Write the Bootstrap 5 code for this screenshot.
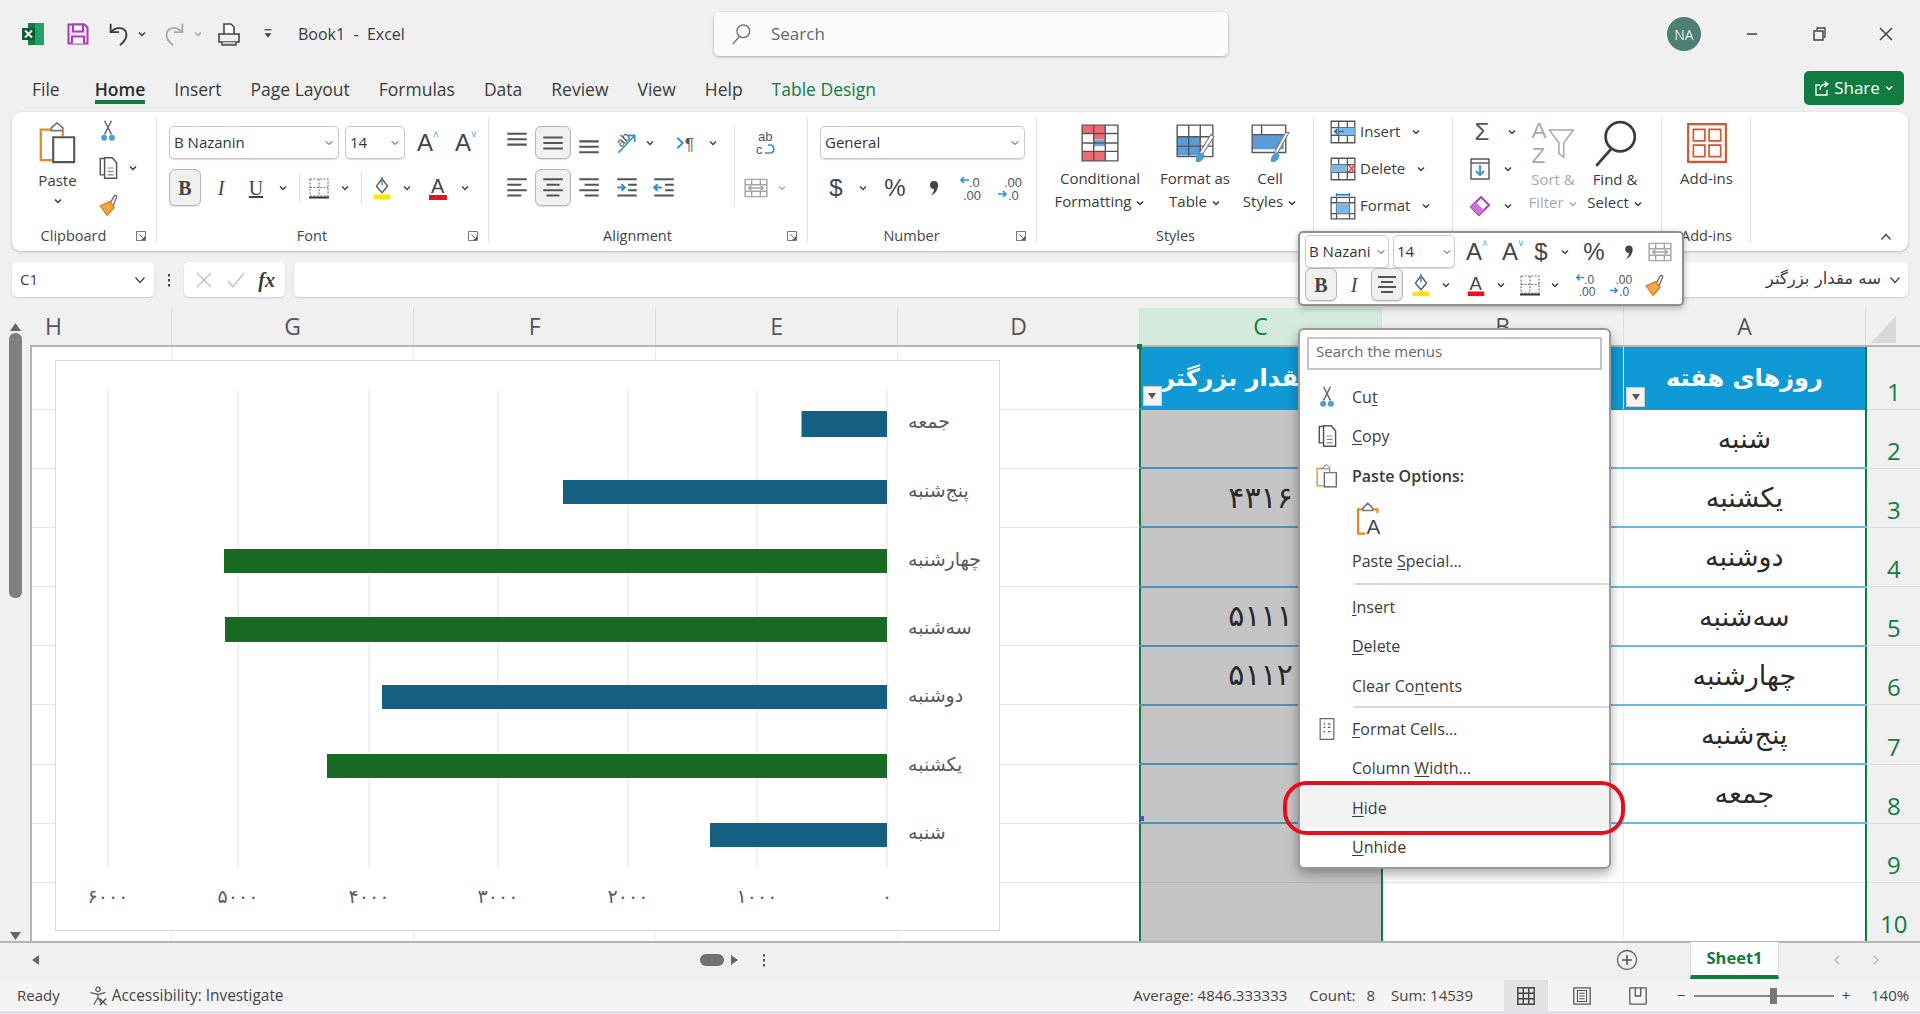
<!DOCTYPE html>
<html lang="en">
<head>
<meta charset="utf-8">
<title>Book1 - Excel</title>
<link rel="stylesheet" href="https://cdn.jsdelivr.net/npm/bootstrap@5.3.0/dist/css/bootstrap.min.css">
<style>
html,body{height:100%;margin:0;overflow:hidden}
body{background:#f0f0f0;font-family:"Open Sans","Liberation Sans",sans-serif;color:#3b3b3b;font-size:15px}
.app{height:1014px;width:1920px}
.fa{font-family:"DejaVu Sans",sans-serif}
svg{display:block;overflow:visible;flex:none}
.x4{width:4px;flex:none}.x6{width:6px;flex:none}.x8{width:8px;flex:none}.x10{width:10px;flex:none}.x12{width:12px;flex:none}.x16{width:16px;flex:none}.x18{width:18px;flex:none}.x20{width:20px;flex:none}.x22{width:22px;flex:none}.x24{width:24px;flex:none}.x28{width:28px;flex:none}.x30{width:30px;flex:none}.x32{width:32px;flex:none}.x34{width:34px;flex:none}.x35{width:35px;flex:none}.x36{width:36px;flex:none}.x38{width:38px;flex:none}.x40{width:40px;flex:none}.x42{width:42px;flex:none}.x44{width:44px;flex:none}.x46{width:46px;flex:none}.x48{width:48px;flex:none}.x52{width:52px;flex:none}.x54{width:54px;flex:none}.x62{width:62px;flex:none}.x66{width:66px;flex:none}.x67{width:67px;flex:none}.x68{width:68px;flex:none}.x70{width:70px;flex:none}.x80{width:80px;flex:none}.x110{width:110px;flex:none}
.i12{width:12px;height:12px}.i16{width:16px;height:16px}.i20{width:20px;height:20px}.i22{width:22px;height:22px}.i24{width:24px;height:24px}.i26{width:26px;height:26px}.i28{width:28px;height:28px}.i34{width:34px;height:34px}.i40{width:42px;height:42px}.c10{width:10px;height:10px}
.ib{display:flex;align-items:center;justify-content:center;padding:0;border:1px solid transparent;border-radius:6px;color:#444;height:100%}
.ib.on{background:#f0f0f0;border-color:#b5b5b5;box-shadow:0 1px 1px rgba(0,0,0,.12)}
.title-row{height:68px;flex:none}
.title-left{width:714px;flex:none;height:100%}
.book{margin-left:18px;font-size:16px;white-space:nowrap}
.searchbox{width:514px;height:44px;background:#fbfbfb;border-radius:5px;box-shadow:0 1px 3px rgba(0,0,0,.3);color:#666;font-size:17px}
.searchbox svg{margin:0 19px 0 16px}
.avatar{width:34px;height:34px;border-radius:50%;background:#4f7f72;color:#dfe9e6;font-size:14px;margin-right:17px}
.win{height:34px}
.tabs-row{height:44px;flex:none;padding-left:32px;padding-right:16px}
.tabs-row .nav{gap:29px;height:44px}
.tabs-row .nav-item:first-child{margin-right:6px}
.tabs-row .nav-link{padding:8px 0 0;height:36px;color:#3b3b3b;font-size:17.5px;line-height:26px;border-bottom:4px solid transparent}
.tabs-row .nav-link.active{color:#2d2d2d;font-weight:600;border-bottom-color:#107c41}
.tabs-row .nav-link.tdesign{color:#107c41}
.share{background:#107c41;color:#fff;width:100px;height:34px;margin-top:3px;border-radius:5px;padding:0;font-size:17px;gap:4px}
.share:hover{background:#107c41;color:#fff}
.ribbon{height:139px;flex:none;margin:0 12px;background:#fff;border:0;border-radius:9px;box-shadow:0 1px 3px rgba(0,0,0,.22)}
.rg{height:100%;flex:none;position:relative}
.rg::after{content:"";position:absolute;right:0;top:5px;bottom:8px;width:1px;background:#dedede}
.rg-body{height:112px;flex:none}
.rg-label{height:24px;flex:none;font-size:14.5px;color:#444;line-height:24px}
.launch{width:22px;flex:none}
.g-clip{width:145px}.g-font{width:332px}.g-align{width:319px}.g-num{width:229px}.g-styles{width:277px}.g-cells{width:139px}.g-edit{width:209px}.g-add{width:89px}
.g-font .rg-body,.g-num .rg-body,.g-align .rg-body{padding-top:14px}
.g-font .rg-body{padding-left:12px}.g-num .rg-body{padding-left:12px}.g-align .rg-body{padding-left:10px}
.row1{height:33px;flex:none}.row2{height:37px;flex:none;margin-top:10px}
.form-select.xs{height:33px;padding:0 20px 0 4px;font-size:15px;color:#333;border-color:#c9c9c9;border-radius:5px;background-size:10px 8px;background-position:right 4px center;box-shadow:0 1px 1px rgba(0,0,0,.15);min-height:0;line-height:1}
.fs170{width:170px;flex:none}.fs60{width:60px;flex:none}.fs205{width:205px;flex:none}
.fs84{width:84px;flex:none}.fs62{width:62px;flex:none}
.A{font-size:24px;line-height:1;color:#444;font-family:"Liberation Sans",sans-serif;position:relative}
.A small{font-size:10px;position:absolute;top:-1px;color:#4c9ed9}
.tb{font-size:20px;line-height:1;font-family:"Liberation Serif",serif}
.sep{width:1px;height:30px;background:#ddd;flex:none}
.clip-paste{width:84px;flex:none;padding-top:10px;padding-left:7px;font-size:15px}
.clip-paste svg{margin-bottom:5px}
.clip-col{width:40px;flex:none}
.v37>div{height:37px}
.big{height:100%;padding-top:10px;font-size:15px;line-height:23px;text-align:center;white-space:nowrap}
.big svg{margin:0 auto 3px}
.big svg.large{width:50px;height:50px;margin-top:-5px;margin-bottom:0}
.big svg.d-inline-block{vertical-align:middle}
.muted{color:#a9a9a9}
.g-styles .rg-body{padding-left:8px}
.g-cells .rg-body{padding-left:15px;padding-top:1px}
.g-edit .rg-body{padding-left:15px;padding-top:1px}
.cellrow{height:37px;font-size:15px;gap:3px}
.cellrow svg.c10{margin-left:8px}
.collapse-btn{width:64px;margin-left:auto;flex:none}
.fbar{height:35px;flex:none;margin:11px 12px}
.fbox{background:#fff;border-radius:5px;box-shadow:0 1px 2px rgba(0,0,0,.15);height:35px}
.namebox{width:142px;flex:none;padding:0 8px;font-size:15px}
.fdots{width:30px;flex:none}
.fbtns{width:101px;flex:none}
.finput{width:auto;margin-left:9px;padding:0 7px 0 10px;font-size:16.5px}
.sheet-wrap{height:633px;flex:none}
.vbar{width:30px;flex:none;padding:25px 8px 0 9px;height:100%;position:relative}
.vthumb{height:265px;background:#808080;border-radius:6px}
.varrow-up,.varrow-dn{position:absolute;left:9px;width:13px}
.varrow-up{top:14px}.varrow-dn{bottom:0}
.sheet{flex:1 1 auto;overflow:hidden;position:relative}
.c-h{width:140.6px}.c-n{width:242px}.c-r{width:55.4px}
.sheet table.table{table-layout:fixed;width:1890px;margin:0;--bs-table-bg:#fff;--bs-table-color:#2a2a2a;border-collapse:collapse}
.sheet table.table>thead>tr>th{height:38px;padding:0;--bs-table-bg:#f0f0f0;color:#555;font-weight:400;font-size:23px;line-height:1;text-align:center;vertical-align:middle;border-bottom:2px solid #b5b5b5;border-right:1px solid #dcdcdc;border-top:0;box-shadow:none}
.sheet table.table>thead>tr>th.hcut{text-align:left;padding-left:14px}
.sheet table.table>thead>tr>th.selh{--bs-table-bg:#d3eadc;color:#107c41}
.sheet table.table>tbody>tr>td{padding:0;height:59.2px;text-align:center;vertical-align:middle;border-bottom:1px solid #e4e4e4;border-right:1px solid #ececec;font-size:27px;line-height:1;box-shadow:none;position:relative}
.sheet table.table>tbody>tr>td:first-child{border-left:2px solid #b5b5b5}
.sheet table.table>tbody>tr.r1>td{height:63px}
.sheet table.table>tbody>tr>td.blu{border-bottom:2px solid #67bbe0}
.sheet table.table>tbody>tr>td.sel{--bs-table-bg:#c4c4c4;border-right:2px solid #107c41;border-left:2px solid #107c41;border-bottom:2px solid #4d91b5;font-size:30px}
.sheet table.table>tbody>tr>td.sel.nb{border-bottom:1px solid #b6b6b6}
.sheet table.table>tbody>tr>td.hd{--bs-table-bg:#0f9ad6;color:#fff;font-weight:700;font-size:24px;border-bottom-color:#0f9ad6;vertical-align:middle}
.sheet table.table>tbody>tr>td.hd.sel{--bs-table-bg:#0f9ad6;border-right-color:#0f9ad6;font-size:24px}
.sheet table.table>tbody>tr>td.rn{--bs-table-bg:#f0f0f0;color:#107c41;font-size:24px;font-family:"Open Sans",sans-serif;border-left:2px solid #107c41;border-bottom:1px solid #dcdcdc;border-right:0;vertical-align:bottom;padding-bottom:5px}
.flt{position:absolute;left:2px;bottom:2px;width:19px;height:20px;background:#f4f4f4;border:1px solid #ccc;display:flex;align-items:center;justify-content:center}
.flt i{width:0;height:0;border:4px solid transparent;border-top:6px solid #555;border-bottom:0}
.tri{width:0;height:0;border-style:solid;border-width:0 0 27px 25px;border-color:transparent transparent #d8d8d8 transparent;position:absolute;top:8px;left:1841px}
.chart{position:absolute;left:25px;top:52px;width:945px;height:571px;background:#fff;border:1px solid #d9d9d9}
.chart text{font-family:"DejaVu Sans",sans-serif;fill:#595959}
.handle{position:absolute;left:1109px;top:508px;width:5px;height:5px;background:#3566a8}
.cell-handle{position:absolute;left:1107px;top:36px;width:5px;height:5px;background:#107c41}
.mini{position:absolute;left:1298px;top:231px;width:386px;height:75px;background:#fff;border:2px solid #8f8f8f;border-radius:5px;box-shadow:0 2px 6px rgba(0,0,0,.3);padding:3px 5px;z-index:5}
.mini .row1{height:31px;margin-bottom:1px}.mini .mrow2{height:33px}
.mini .form-select.xs{padding:0 12px 0 3px;background-position:right 2px center}
.ctx.dropdown-menu{position:absolute;left:1298px;top:328px;width:313px;height:541px;margin:0;padding:7px 0 0;border:2px solid #9a9a9a;border-radius:6px;background:#fff;box-shadow:0 5px 12px rgba(0,0,0,.33);z-index:6}
.ctx .msearch{height:33px;margin:0 7px 7px;border:2px solid #c4c4c4;color:#666;font-size:15px;padding:0 7px;line-height:25px}
.ctx .dropdown-item{height:39.5px;padding:0;display:flex;align-items:center;color:#3b3b3b;font-size:16px}
.ctx .dropdown-item .mi{width:52px;flex:none;display:flex;justify-content:center;padding-left:2px}
.ctx .dropdown-item.hl{background:#f3f3f3}
.ctx .dropdown-item.tall{height:46px}
.ctx .dropdown-divider{margin:2px 0 2px 54px;border-color:#d8d8d8;opacity:1;border-top-width:2px}
.ctx .dropdown-divider.thin{margin-top:.75px;margin-bottom:.75px}
.ctx u{text-underline-offset:2px}
.ring{position:absolute;left:1283px;top:781px;width:342px;height:54px;border:4px solid #e60f1e;border-radius:24px;z-index:7;pointer-events:none}
.bot{height:36px;flex:none;background:#f0f0f0;border-top:2px solid #b5b5b5}
.hthumb{width:24px;height:12px;background:#707070;border-radius:6px;flex:none}
.hspace{flex:none;padding-left:658px}
.plus{margin-left:auto;margin-right:52px}
.sheettab{width:89px;height:37px;background:#fff;border-bottom:4px solid #107c41;color:#107c41;font-weight:700;font-size:16.5px;flex:none;border-left:1px solid #ddd;border-right:1px solid #ddd}
.tabnav{width:141px;flex:none;gap:27px;padding-left:52px}
.sb{height:31px;flex:none;margin-top:3px;background:#f4f4f4;font-size:15px;color:#444;white-space:nowrap}
.strip{height:3px;flex:none;background:#d8e4ee}
.vw{height:31px;width:44px;flex:none}
.vw.on{background:#e2e2e2}
.slider{width:140px;height:2px;background:#888;position:relative;flex:none;margin-left:5px}
.slider i{position:absolute;left:76px;top:-7px;width:7px;height:16px;background:#777}
.al-col{width:235px;flex:none}
.al-side{width:60px;flex:none;border-left:1px solid #e2e2e2;height:80px}
.ns{font-size:24px;font-family:"Liberation Sans",sans-serif}
.sigma{font-size:24px;line-height:1;color:#555;font-family:"Liberation Sans",sans-serif}
.st-ready{margin-left:17px}.st-acc{margin-left:28px}.st-accl{margin-left:4px;font-size:15.4px}
.st-avg{margin-right:22px}.st-cnt{margin-right:16px;word-spacing:7px}.st-sum{margin-right:31px}
.st-min{margin-left:13px}.st-plus{margin-left:4px}
.st-pct{margin-left:17px;margin-right:11px;width:38px;text-align:center}
</style>
</head>
<body>
<svg class="d-none" xmlns="http://www.w3.org/2000/svg">
<symbol id="chev" viewBox="0 0 10 10"><path d="M2 3.5l3 3 3-3" fill="none" stroke="currentColor" stroke-width="1.5"/></symbol>
<symbol id="xl" viewBox="0 0 26 26"><path d="M8 2h16v22H8z" fill="#107c41"/><path d="M15 2h9v22h-9z" fill="#21a366"/><path d="M2 7h13v12H2z" fill="#0b5c30"/><path d="M5 9.5l7 7m0-7l-7 7" stroke="#fff" stroke-width="1.8"/></symbol>
<symbol id="save" viewBox="0 0 24 24"><path d="M2.5 2.5h16l3 3v16h-19z" fill="#f3e3f7" stroke="#ab3dbd" stroke-width="2"/><path d="M7 2.5h10v7H7zM6 21.5v-7h12v7" fill="#fff" stroke="#ab3dbd" stroke-width="2"/></symbol>
<symbol id="undo" viewBox="0 0 24 28"><path d="M3 3v9h9" fill="none" stroke="currentColor" stroke-width="2"/><path d="M3.5 12C8 6 19 6 20 14c.5 5-3 9-7 12" fill="none" stroke="currentColor" stroke-width="2"/></symbol>
<symbol id="redo" viewBox="0 0 24 28"><path d="M21 3v9h-9" fill="none" stroke="currentColor" stroke-width="2"/><path d="M20.5 12C16 6 5 6 4 14c-.5 5 3 9 7 12" fill="none" stroke="currentColor" stroke-width="2"/></symbol>
<symbol id="print" viewBox="0 0 24 24"><path d="M7 12V2h7l3 3v7" fill="#fff" stroke="#444" stroke-width="1.6"/><path d="M2 12h20v8H2z" fill="none" stroke="#444" stroke-width="1.6"/><path d="M5 20v3h14v-3" fill="#ccc" stroke="#444" stroke-width="1.4"/></symbol>
<symbol id="qat" viewBox="0 0 12 14"><path d="M2 2h8" stroke="#444" stroke-width="1.5"/><path d="M2 6h8l-4 5z" fill="#444"/></symbol>
<symbol id="find" viewBox="0 0 24 24"><circle cx="14.5" cy="9" r="7" fill="none" stroke="currentColor" stroke-width="1.3"/><path d="M10 15L3 23" stroke="currentColor" stroke-width="1.3"/></symbol>
<symbol id="paste" viewBox="0 0 40 44"><path d="M13 8H2v32h12" fill="none" stroke="#e58a23" stroke-width="2.4"/><path d="M13 9V6l6-5 6 5v3z" fill="#fff" stroke="#777" stroke-width="1.8"/><path d="M25 9v6" stroke="#e58a23" stroke-width="2.4"/><path d="M15 16h22v26H15z" fill="#fff" stroke="#555" stroke-width="2.2"/></symbol>
<symbol id="cut" viewBox="0 0 24 28"><path d="M8 18L16 2M16 18L8 2" stroke="#666" stroke-width="1.7"/><circle cx="7.5" cy="22" r="3.5" fill="#4c9ed9"/><circle cx="16.5" cy="22" r="3.5" fill="#4c9ed9"/></symbol>
<symbol id="copy" viewBox="0 0 24 28"><path d="M8 3H3v19h5" fill="none" stroke="#555" stroke-width="1.7"/><path d="M8 2h9l5 6v18H8z" fill="#fff" stroke="#555" stroke-width="1.7"/><path d="M11.5 14h7M11.5 18h7M11.5 22h7" stroke="#888" stroke-width="1.3"/></symbol>
<symbol id="brush" viewBox="0 0 24 28"><path d="M14 13l5-9c1-2 4-1 3 1l-4 10z" fill="#fff" stroke="#666" stroke-width="1.5"/><path d="M3 15l11-5 5 7-8 9z" fill="#f3a64a" stroke="#df7f1a" stroke-width="1.6"/></symbol>
<symbol id="launch" viewBox="0 0 12 12"><path d="M1.5 1.5h9v9h-9z" fill="none" stroke="#777"/><path d="M4.5 4.5l5 5M9.5 6.5v3h-3" fill="none" stroke="#555"/></symbol>
<symbol id="borders" viewBox="0 0 24 24"><path d="M3 3h18v17H3zM12 3v17M3 11.5h18" fill="none" stroke="#777" stroke-width="1.2" stroke-dasharray="2 1.4"/><path d="M2 21.5h20" stroke="#333" stroke-width="2"/></symbol>
<symbol id="fillc" viewBox="0 0 24 26"><path d="M12 3l6 8-6 7-6-7z" fill="#fff" stroke="#555" stroke-width="1.5"/><path d="M12 1v9" stroke="#3c8ed0" stroke-width="1.6"/><path d="M3 20h18v5H3z" fill="#ffe600"/></symbol>
<symbol id="fcol" viewBox="0 0 24 26"><text x="5" y="18" font-size="20" font-family="Liberation Sans" fill="#444">A</text><path d="M3 20h18v5H3z" fill="#e8131c"/></symbol>
<symbol id="comma" viewBox="0 0 24 24"><circle cx="13" cy="9" r="4" fill="#444"/><path d="M16.8 9c.4 5-2.5 9-7 10.5 2.5-2.5 3.5-5 3-7z" fill="#444"/></symbol>
<symbol id="l-top" viewBox="0 0 24 24"><path d="M3 3.5h18M3 8.5h18M3 13.5h18" stroke="#555" stroke-width="1.9"/></symbol>
<symbol id="l-mid" viewBox="0 0 24 24"><path d="M3 7h18M3 12h18M3 17h18" stroke="#555" stroke-width="1.9"/></symbol>
<symbol id="l-bot" viewBox="0 0 24 24"><path d="M3 10.5h18M3 15.5h18M3 20.5h18" stroke="#555" stroke-width="1.9"/></symbol>
<symbol id="a-l" viewBox="0 0 24 24"><path d="M3 4h18M3 9h13M3 14h18M3 19h13" stroke="#555" stroke-width="1.9"/></symbol>
<symbol id="a-c" viewBox="0 0 24 24"><path d="M3 4h18M6 9h12M3 14h18M6 19h12" stroke="#555" stroke-width="1.9"/></symbol>
<symbol id="a-r" viewBox="0 0 24 24"><path d="M3 4h18M8 9h13M3 14h18M8 19h13" stroke="#555" stroke-width="1.9"/></symbol>
<symbol id="out" viewBox="0 0 24 24"><path d="M3 4h18M13 9h8M13 14h8M3 19h18" stroke="#555" stroke-width="1.9"/><path d="M3 11.5h7M7 8.5l3 3-3 3" fill="none" stroke="#2e8fd6" stroke-width="1.8"/></symbol>
<symbol id="ind" viewBox="0 0 24 24"><path d="M3 4h18M13 9h8M13 14h8M3 19h18" stroke="#555" stroke-width="1.9"/><path d="M10 11.5H3M6 8.5l-3 3 3 3" fill="none" stroke="#2e8fd6" stroke-width="1.8"/></symbol>
<symbol id="orient" viewBox="0 0 24 24"><text x="3" y="14" font-size="12" font-family="Liberation Sans" fill="#555" transform="rotate(-45 8 10)">ab</text><path d="M5 21L19 6M14 5h6v6" fill="none" stroke="#2e8fd6" stroke-width="1.6"/></symbol>
<symbol id="rtl" viewBox="0 0 24 24"><text x="10" y="18" font-size="16" font-family="Liberation Sans" fill="#555">¶</text><path d="M3 7l5 5-5 5" fill="none" stroke="#2e8fd6" stroke-width="1.8"/></symbol>
<symbol id="wrap" viewBox="0 0 24 28"><text x="5" y="12" font-size="13" font-family="Liberation Sans" fill="#555">ab</text><text x="3" y="25" font-size="13" font-family="Liberation Sans" fill="#555">c</text><path d="M12 24h5c5 0 5-8 0-8h-2" fill="none" stroke="#2e8fd6" stroke-width="1.7"/></symbol>
<symbol id="merge" viewBox="0 0 24 24"><path d="M2 4h20v16H2zM2 9h20M2 15h20M8 4v5M16 4v5M8 15v5M16 15v5" fill="none" stroke="#a5a5a5" stroke-width="1.3"/><path d="M5 12h14M8 10l-3 2 3 2M16 10l3 2-3 2" fill="none" stroke="#a5a5a5" stroke-width="1.2"/></symbol>
<symbol id="inc" viewBox="0 0 26 26"><path d="M10 5H2M5 2L2 5l3 3" fill="none" stroke="#2e8fd6" stroke-width="1.6"/><text x="10" y="12" font-size="13" font-family="Liberation Sans" fill="#555">.0</text><text x="4" y="25" font-size="13" font-family="Liberation Sans" fill="#555">.00</text></symbol>
<symbol id="dec" viewBox="0 0 26 26"><text x="8" y="12" font-size="13" font-family="Liberation Sans" fill="#555">.00</text><path d="M2 19h8M7 16l3 3-3 3" fill="none" stroke="#2e8fd6" stroke-width="1.6"/><text x="12" y="25" font-size="13" font-family="Liberation Sans" fill="#555">.0</text></symbol>
<symbol id="cf" viewBox="0 0 40 40"><path d="M3 3h34v34H3z" fill="#fff"/><path d="M3 3h22v8H3zM14 11h11v6H14zM3 28h22v9H3z" fill="#ef6a72"/><path d="M3 11h11v6H3zM14 17h11v5H14z" fill="#fff"/><path d="M14 17h11v6H14z" fill="#6ea8dc"/><path d="M3 3h34v34H3zM14 3v34M25 3v34M3 11h34M3 20h34M3 28h34" fill="none" stroke="#555" stroke-width="1.3"/></symbol>
<symbol id="ft" viewBox="0 0 40 40"><path d="M3 14h22v18H3z" fill="#5b9bd8"/><path d="M3 3h34v30H3zM14 3v30M25 3v30M3 14h34M3 23h34" fill="none" stroke="#555" stroke-width="1.3"/><path d="M38 14L27 31l-3-1 11-18z" fill="#fff" stroke="#777"/><path d="M26 29c-4 2-6 5-5 9 4 1 8-2 8-7z" fill="#4c9ed9"/></symbol>
<symbol id="cs" viewBox="0 0 40 40"><path d="M3 12h30v14H3z" fill="#5b9bd8"/><path d="M3 3h32v26H3z" fill="none" stroke="#555" stroke-width="1.3"/><path d="M3 12h30M12 3v9" stroke="#555" stroke-width="1.3"/><path d="M38 10L27 30l-3-1 11-19z" fill="#fff" stroke="#777"/><path d="M26 29c-4 2-6 5-5 9 4 1 8-2 8-7z" fill="#4c9ed9"/></symbol>
<symbol id="ins" viewBox="0 0 26 26"><path d="M2 3h22v20H2zM2 9h22M2 16h22M9 3v20M17 3v20" fill="none" stroke="#555" stroke-width="1.2"/><path d="M9 9h15v7H9z" fill="#7fb7e3"/><path d="M14 12.5H5M8 10l-3 2.5L8 15" fill="none" stroke="#1d7ac9" stroke-width="1.5"/></symbol>
<symbol id="del" viewBox="0 0 26 26"><path d="M2 3h22v20H2zM2 9h22M2 16h22M9 3v20M17 3v20" fill="none" stroke="#555" stroke-width="1.2"/><path d="M2 9h14v7H2z" fill="#7fb7e3"/><path d="M18 9l6 7m0-7l-6 7" stroke="#e04848" stroke-width="1.6"/></symbol>
<symbol id="fmt" viewBox="0 0 26 26"><path d="M2 5h22v20H2zM2 10h22M2 20h22M7 5v20M19 5v20" fill="none" stroke="#555" stroke-width="1.2"/><path d="M7 10h12v10H7z" fill="#7fb7e3"/><path d="M7 1v3M19 1v3M7 2.5h12" stroke="#1d7ac9" stroke-width="1.3"/></symbol>
<symbol id="fd" viewBox="0 0 24 24"><path d="M3 2h18v20H3z" fill="#fff" stroke="#555" stroke-width="1.4"/><path d="M3 6h18" stroke="#555" stroke-width="1.4"/><path d="M12 8v10M8 14l4 4 4-4" fill="none" stroke="#2e8fd6" stroke-width="1.8"/></symbol>
<symbol id="clr" viewBox="0 0 24 24"><path d="M3 13L13 3l8 8-10 10z" fill="#fff" stroke="#a93fbf" stroke-width="2"/><path d="M3 13l5-5 8 8-5 5z" fill="#c67ad6"/></symbol>
<symbol id="sort" viewBox="0 0 42 42"><text x="3" y="17" font-size="19" font-family="Liberation Sans" fill="#a9a9a9">A</text><text x="3" y="38" font-size="19" font-family="Liberation Sans" fill="#a9a9a9">Z</text><path d="M18 10h20l-8 11v12l-4-3v-9z" fill="none" stroke="#a9a9a9" stroke-width="1.3"/></symbol>
<symbol id="addin" viewBox="0 0 40 40"><path d="M2 2h36v36H2z" fill="none" stroke="#d9542b" stroke-width="2"/><path d="M7 7h11v11H7zM22 7h11v11H22zM7 22h11v11H7zM22 22h11v11H22z" fill="none" stroke="#d9542b" stroke-width="1.6"/></symbol>
<symbol id="pa" viewBox="0 0 24 28"><path d="M7 6H3v20h6" fill="none" stroke="#e58a23" stroke-width="1.8"/><path d="M7 7V5l4-4 4 4v2z" fill="#fff" stroke="#777" stroke-width="1.4"/><path d="M15 6h4v3" fill="none" stroke="#e58a23" stroke-width="1.8"/><text x="10" y="26" font-size="17" font-family="Liberation Sans" fill="#444">A</text></symbol>
<symbol id="fc" viewBox="0 0 20 28"><path d="M2 2h16v24H2z" fill="#fff" stroke="#666" stroke-width="1.4"/><path d="M6 8h2M6 12h2M6 17h2M11 8h3M11 12h3M11 17h3" stroke="#555" stroke-width="1.4"/></symbol>
<symbol id="acc" viewBox="0 0 24 24"><circle cx="12" cy="4" r="2.6" fill="none" stroke="#555" stroke-width="1.4"/><path d="M3 8l9 2 9-2M12 10v4l-5 8M12 14l5 8" fill="none" stroke="#555" stroke-width="1.4"/><path d="M14 15l8 8m0-8l-8 8" stroke="#444" stroke-width="1.4"/></symbol>
<symbol id="grid" viewBox="0 0 22 22"><path d="M2 2h18v18H2zM8 2v18M14 2v18M2 8h18M2 14h18" fill="none" stroke="#444" stroke-width="1.6"/></symbol>
<symbol id="page" viewBox="0 0 22 22"><path d="M2 2h18v18H2z" fill="none" stroke="#555" stroke-width="1.4"/><path d="M6 5h10v12H6zM8 8h6M8 11h6M8 14h6" fill="none" stroke="#555" stroke-width="1.2"/></symbol>
<symbol id="brk" viewBox="0 0 22 22"><path d="M2 20V2h18v18M2 20h18" fill="none" stroke="#555" stroke-width="1.4"/><path d="M8 2v9h6V2" fill="none" stroke="#555" stroke-width="1.4"/></symbol>
</svg>

<div class="app d-flex flex-column position-relative">

  <!-- title bar -->
  <header class="title-row d-flex align-items-center">
    <div class="title-left d-flex align-items-center">
      <div class="x66 d-flex justify-content-center"><svg class="i26"><use href="#xl"/></svg></div>
      <div class="x24 d-flex justify-content-center"><svg class="i24"><use href="#save"/></svg></div>
      <div class="x12"></div>
      <div class="x34 d-flex justify-content-center"><svg class="i26"><use href="#undo"/></svg></div>
      <div class="x12 d-flex justify-content-center"><svg class="c10"><use href="#chev"/></svg></div>
      <div class="x6"></div>
      <div class="x40 d-flex justify-content-center muted"><svg class="i26"><use href="#redo"/></svg></div>
      <div class="x8 d-flex justify-content-center muted"><svg class="c10"><use href="#chev"/></svg></div>
      <div class="x54 d-flex justify-content-center"><svg class="i24"><use href="#print"/></svg></div>
      <div class="x24 d-flex justify-content-center"><svg class="i12"><use href="#qat"/></svg></div>
      <div class="book">Book1&nbsp; - &nbsp;Excel</div>
    </div>
    <div class="searchbox d-flex align-items-center"><svg class="i22"><use href="#find"/></svg><span>Search</span></div>
    <div class="ms-auto d-flex align-items-center">
      <div class="avatar d-flex align-items-center justify-content-center">NA</div>
      <div class="x67 win d-flex align-items-center justify-content-center"><svg class="i16" viewBox="0 0 16 16"><path d="M3 8h10" stroke="#444" stroke-width="1.6"/></svg></div>
      <div class="x67 win d-flex align-items-center justify-content-center"><svg class="i16" viewBox="0 0 16 16"><path d="M3 5h9v9H3z" fill="none" stroke="#444" stroke-width="1.5"/><path d="M6 4V2h8v9h-1" fill="none" stroke="#444" stroke-width="1.3"/></svg></div>
      <div class="x68 win d-flex align-items-center justify-content-center"><svg class="i16" viewBox="0 0 16 16"><path d="M2 2l12 12M14 2L2 14" stroke="#444" stroke-width="1.5"/></svg></div>
    </div>
  </header>

  <!-- tabs -->
  <div class="tabs-row d-flex justify-content-between align-items-start">
    <ul class="nav">
      <li class="nav-item"><a class="nav-link" href="#">File</a></li>
      <li class="nav-item"><a class="nav-link active" href="#">Home</a></li>
      <li class="nav-item"><a class="nav-link" href="#">Insert</a></li>
      <li class="nav-item"><a class="nav-link" href="#">Page Layout</a></li>
      <li class="nav-item"><a class="nav-link" href="#">Formulas</a></li>
      <li class="nav-item"><a class="nav-link" href="#">Data</a></li>
      <li class="nav-item"><a class="nav-link" href="#">Review</a></li>
      <li class="nav-item"><a class="nav-link" href="#">View</a></li>
      <li class="nav-item"><a class="nav-link" href="#">Help</a></li>
      <li class="nav-item"><a class="nav-link tdesign" href="#">Table Design</a></li>
    </ul>
    <button class="btn share d-flex align-items-center justify-content-center" type="button">
      <svg class="i16" viewBox="0 0 16 16"><path d="M6 5H2v10h11v-5" fill="none" stroke="#fff" stroke-width="1.3"/><path d="M6 10c0-4 3-6 7-6M10.5 1.5L14 4l-3.5 3" fill="none" stroke="#fff" stroke-width="1.3"/></svg>
      <span>Share</span><svg class="c10"><use href="#chev"/></svg>
    </button>
  </div>

  <!-- ribbon -->
  <section class="card ribbon flex-row">
    <div class="rg g-clip d-flex flex-column">
      <div class="rg-body d-flex">
        <div class="clip-paste d-flex flex-column align-items-center">
          <svg class="i40"><use href="#paste"/></svg>
          <span>Paste</span>
          <svg class="c10 mt-1"><use href="#chev"/></svg>
        </div>
        <div class="clip-col v37">
          <div class="d-flex align-items-center"><svg class="i24"><use href="#cut"/></svg></div>
          <div class="d-flex align-items-center"><svg class="i24"><use href="#copy"/></svg><svg class="c10 ms-2"><use href="#chev"/></svg></div>
          <div class="d-flex align-items-center"><svg class="i24"><use href="#brush"/></svg></div>
        </div>
      </div>
      <div class="rg-label d-flex"><span class="flex-fill text-center">Clipboard</span><span class="launch d-flex align-items-center"><svg class="i12"><use href="#launch"/></svg></span></div>
    </div>

    <div class="rg g-font d-flex flex-column">
      <div class="rg-body">
        <div class="row1 d-flex align-items-center">
          <select class="form-select xs fs170"><option>B Nazanin</option></select>
          <div class="x6"></div>
          <select class="form-select xs fs60"><option>14</option></select>
          <div class="x40 d-flex justify-content-center"><span class="A">A<small>˄</small></span></div>
          <div class="x36 d-flex justify-content-center"><span class="A">A<small>˅</small></span></div>
        </div>
        <div class="row2 d-flex align-items-center">
          <button class="btn ib on x32 tb fw-bold" type="button">B</button>
          <div class="x40 ib tb fst-italic">I</div>
          <div class="x30 ib tb text-decoration-underline">U</div>
          <div class="x24 ib"><svg class="c10"><use href="#chev"/></svg></div>
          <div class="x8 d-flex justify-content-center"><span class="sep"></span></div>
          <div class="x32 ib"><svg class="i24"><use href="#borders"/></svg></div>
          <div class="x20 ib"><svg class="c10"><use href="#chev"/></svg></div>
          <div class="x12 d-flex justify-content-center"><span class="sep"></span></div>
          <div class="x30 ib"><svg class="i24"><use href="#fillc"/></svg></div>
          <div class="x20 ib"><svg class="c10"><use href="#chev"/></svg></div>
          <div class="x42 ib"><svg class="i26"><use href="#fcol"/></svg></div>
          <div class="x12 ib"><svg class="c10"><use href="#chev"/></svg></div>
        </div>
      </div>
      <div class="rg-label d-flex"><span class="flex-fill text-center">Font</span><span class="launch d-flex align-items-center"><svg class="i12"><use href="#launch"/></svg></span></div>
    </div>

    <div class="rg g-align d-flex flex-column">
      <div class="rg-body d-flex">
        <div class="d-flex flex-column al-col">
          <div class="row1 d-flex align-items-center">
            <div class="x36 ib"><svg class="i26"><use href="#l-top"/></svg></div>
            <button class="btn ib on x36" type="button"><svg class="i26"><use href="#l-mid"/></svg></button>
            <div class="x36 ib"><svg class="i26"><use href="#l-bot"/></svg></div>
            <div class="x38 ib"><svg class="i26"><use href="#orient"/></svg></div>
            <div class="x10 ib"><svg class="c10"><use href="#chev"/></svg></div>
            <div class="x12"></div>
            <div class="x40 ib"><svg class="i26"><use href="#rtl"/></svg></div>
            <div class="x12 ib"><svg class="c10"><use href="#chev"/></svg></div>
          </div>
          <div class="row2 d-flex align-items-center">
            <div class="x36 ib"><svg class="i26"><use href="#a-l"/></svg></div>
            <button class="btn ib on x36" type="button"><svg class="i26"><use href="#a-c"/></svg></button>
            <div class="x36 ib"><svg class="i26"><use href="#a-r"/></svg></div>
            <div class="x40 ib"><svg class="i26"><use href="#out"/></svg></div>
            <div class="x34 ib"><svg class="i26"><use href="#ind"/></svg></div>
          </div>
        </div>
        <div class="al-side d-flex flex-column">
          <div class="row1 d-flex align-items-center ps-3"><svg class="i28"><use href="#wrap"/></svg></div>
          <div class="row2 d-flex align-items-center ps-2"><svg class="i26"><use href="#merge"/></svg><svg class="c10 ms-2 muted"><use href="#chev"/></svg></div>
        </div>
      </div>
      <div class="rg-label d-flex"><span class="flex-fill text-center">Alignment</span><span class="launch d-flex align-items-center"><svg class="i12"><use href="#launch"/></svg></span></div>
    </div>

    <div class="rg g-num d-flex flex-column">
      <div class="rg-body">
        <div class="row1 d-flex align-items-center"><select class="form-select xs fs205"><option>General</option></select></div>
        <div class="row2 d-flex align-items-center">
          <div class="x32 ib ns">$</div>
          <div class="x22 ib"><svg class="c10"><use href="#chev"/></svg></div>
          <div class="x42 ib ns">%</div>
          <div class="x34 ib"><svg class="i24"><use href="#comma"/></svg></div>
          <div class="x44 ib"><svg class="i26"><use href="#inc"/></svg></div>
          <div class="x30 ib"><svg class="i26"><use href="#dec"/></svg></div>
        </div>
      </div>
      <div class="rg-label d-flex"><span class="flex-fill text-center">Number</span><span class="launch d-flex align-items-center"><svg class="i12"><use href="#launch"/></svg></span></div>
    </div>

    <div class="rg g-styles d-flex flex-column">
      <div class="rg-body d-flex">
        <div class="big x110"><svg class="i40"><use href="#cf"/></svg>Conditional<br>Formatting <svg class="c10 d-inline-block m-0"><use href="#chev"/></svg></div>
        <div class="big x80"><svg class="i40"><use href="#ft"/></svg>Format as<br>Table <svg class="c10 d-inline-block m-0"><use href="#chev"/></svg></div>
        <div class="big x70"><svg class="i40"><use href="#cs"/></svg>Cell<br>Styles <svg class="c10 d-inline-block m-0"><use href="#chev"/></svg></div>
      </div>
      <div class="rg-label text-center">Styles</div>
    </div>

    <div class="rg g-cells d-flex flex-column">
      <div class="rg-body">
        <div class="cellrow d-flex align-items-center"><svg class="i28"><use href="#ins"/></svg><span>Insert</span><svg class="c10"><use href="#chev"/></svg></div>
        <div class="cellrow d-flex align-items-center"><svg class="i28"><use href="#del"/></svg><span>Delete</span><svg class="c10"><use href="#chev"/></svg></div>
        <div class="cellrow d-flex align-items-center"><svg class="i28"><use href="#fmt"/></svg><span>Format</span><svg class="c10"><use href="#chev"/></svg></div>
      </div>
      <div class="rg-label"></div>
    </div>

    <div class="rg g-edit d-flex flex-column">
      <div class="rg-body d-flex">
        <div class="x54">
          <div class="cellrow d-flex align-items-center"><span class="x28 text-center sigma">Σ</span><svg class="c10"><use href="#chev"/></svg></div>
          <div class="cellrow d-flex align-items-center"><svg class="i24 x28"><use href="#fd"/></svg><svg class="c10"><use href="#chev"/></svg></div>
          <div class="cellrow d-flex align-items-center"><svg class="i24 x28"><use href="#clr"/></svg><svg class="c10"><use href="#chev"/></svg></div>
        </div>
        <div class="big x62 muted"><svg class="large"><use href="#sort"/></svg>Sort &amp;<br>Filter <svg class="c10 d-inline-block m-0"><use href="#chev"/></svg></div>
        <div class="big x62"><svg class="large"><use href="#find"/></svg>Find &amp;<br>Select <svg class="c10 d-inline-block m-0"><use href="#chev"/></svg></div>
      </div>
      <div class="rg-label"></div>
    </div>

    <div class="rg g-add d-flex flex-column">
      <div class="rg-body"><div class="big"><svg class="i40"><use href="#addin"/></svg>Add-ins</div></div>
      <div class="rg-label text-center">Add-ins</div>
    </div>

    <div class="collapse-btn d-flex flex-column justify-content-end align-items-end pe-3 pb-2"><svg class="i12" viewBox="0 0 12 12"><path d="M1.5 8.5L6 3.5l4.5 5" fill="none" stroke="#444" stroke-width="1.4"/></svg></div>
  </section>

  <!-- formula bar -->
  <div class="fbar d-flex align-items-center">
    <div class="fbox namebox d-flex align-items-center justify-content-between"><span>C1</span><svg class="i12" viewBox="0 0 12 12"><path d="M1.5 3.5L6 8.5l4.5-5" fill="none" stroke="#444" stroke-width="1.3"/></svg></div>
    <div class="fdots d-flex justify-content-center"><svg class="i16" viewBox="0 0 16 16"><path d="M8 2v2.4M8 7v2.4M8 12v2.4" stroke="#444" stroke-width="2"/></svg></div>
    <div class="fbox fbtns d-flex align-items-center justify-content-around px-1">
      <svg class="i20" viewBox="0 0 20 20"><path d="M3 3l14 14M17 3L3 17" stroke="#bdbdbd" stroke-width="1.3"/></svg>
      <svg class="i20" viewBox="0 0 20 20"><path d="M2 11l5 6L18 3" fill="none" stroke="#bdbdbd" stroke-width="1.3"/></svg>
      <span class="tb fst-italic fw-bold">fx</span>
    </div>
    <div class="fbox finput flex-fill d-flex align-items-center justify-content-end fa"><span class="me-2" dir="rtl">سه مقدار بزرگتر</span><svg class="i12" viewBox="0 0 12 12"><path d="M1.5 3.5L6 8.5l4.5-5" fill="none" stroke="#444" stroke-width="1.3"/></svg></div>
  </div>

  <!-- sheet -->
  <div class="sheet-wrap d-flex">
    <div class="vbar">
      <svg class="varrow-up" viewBox="0 0 13 10"><path d="M6.5 1l5.5 8H1z" fill="#666"/></svg>
      <div class="vthumb"></div>
      <svg class="varrow-dn" viewBox="0 0 13 10"><path d="M6.5 9L1 1h11z" fill="#666"/></svg>
    </div>
    <div class="sheet">
      <table class="table">
        <colgroup><col class="c-h"><col class="c-n"><col class="c-n"><col class="c-n"><col class="c-n"><col class="c-n"><col class="c-n"><col class="c-n"><col class="c-r"></colgroup>
        <thead>
          <tr><th class="hcut">H</th><th>G</th><th>F</th><th>E</th><th>D</th><th class="selh">C</th><th>B</th><th>A</th><th></th></tr>
        </thead>
        <tbody class="fa">
          <tr class="r1"><td></td><td></td><td></td><td></td><td></td><td class="sel hd"><span class="flt"><i></i></span><span dir="rtl">سه مقدار بزرگتر</span></td><td class="hd"></td><td class="hd"><span class="flt"><i></i></span><span dir="rtl">روزهای هفته</span></td><td class="rn">1</td></tr>
          <tr><td></td><td></td><td></td><td></td><td></td><td class="sel"></td><td class="blu"></td><td class="blu" dir="rtl">شنبه</td><td class="rn">2</td></tr>
          <tr><td></td><td></td><td></td><td></td><td></td><td class="sel">۴۳۱۶</td><td class="blu"></td><td class="blu" dir="rtl">یکشنبه</td><td class="rn">3</td></tr>
          <tr><td></td><td></td><td></td><td></td><td></td><td class="sel"></td><td class="blu"></td><td class="blu" dir="rtl">دوشنبه</td><td class="rn">4</td></tr>
          <tr><td></td><td></td><td></td><td></td><td></td><td class="sel">۵۱۱۱</td><td class="blu"></td><td class="blu" dir="rtl">سه‌شنبه</td><td class="rn">5</td></tr>
          <tr><td></td><td></td><td></td><td></td><td></td><td class="sel">۵۱۱۲</td><td class="blu"></td><td class="blu" dir="rtl">چهارشنبه</td><td class="rn">6</td></tr>
          <tr><td></td><td></td><td></td><td></td><td></td><td class="sel"></td><td class="blu"></td><td class="blu" dir="rtl">پنج‌شنبه</td><td class="rn">7</td></tr>
          <tr><td></td><td></td><td></td><td></td><td></td><td class="sel"></td><td class="blu"></td><td class="blu" dir="rtl">جمعه</td><td class="rn">8</td></tr>
          <tr><td></td><td></td><td></td><td></td><td></td><td class="sel nb"></td><td></td><td></td><td class="rn">9</td></tr>
          <tr><td></td><td></td><td></td><td></td><td></td><td class="sel nb"></td><td></td><td></td><td class="rn">10</td></tr>
        </tbody>
      </table>
      <div class="tri"></div>
      <div class="cell-handle"></div>
      <div class="handle"></div>
      <svg class="chart" viewBox="55 360 943 569" xmlns="http://www.w3.org/2000/svg">
        <path d="M107 389V867M237 389V867M368 389V867M497 389V867M627 389V867M756 389V867M886 389V867" stroke="#e3e3e3" stroke-width="1"/>
        <rect x="800.5" y="410" width="85.5" height="26" fill="#156082"/>
        <rect x="562" y="479" width="324" height="24" fill="#156082"/>
        <rect x="223" y="548" width="663" height="24" fill="#196b24"/>
        <rect x="224" y="616" width="662" height="25" fill="#196b24"/>
        <rect x="381" y="684" width="505" height="24" fill="#156082"/>
        <rect x="326" y="753" width="560" height="24" fill="#196b24"/>
        <rect x="709" y="822" width="177" height="24" fill="#156082"/>
        <g font-size="19">
          <text x="907" y="427">جمعه</text>
          <text x="907" y="496">پنج‌شنبه</text>
          <text x="907" y="565">چهارشنبه</text>
          <text x="907" y="633">سه‌شنبه</text>
          <text x="907" y="701">دوشنبه</text>
          <text x="907" y="770">یکشنبه</text>
          <text x="907" y="838">شنبه</text>
        </g>
        <g font-size="19" text-anchor="middle" letter-spacing="5">
          <text x="107" y="902">۶۰۰۰</text><text x="237" y="902">۵۰۰۰</text><text x="368" y="902">۴۰۰۰</text><text x="497" y="902">۳۰۰۰</text><text x="627" y="902">۲۰۰۰</text><text x="756" y="902">۱۰۰۰</text><text x="886" y="902">۰</text>
        </g>
      </svg>
    </div>
  </div>

  <!-- sheet tabs / hscroll -->
  <div class="bot d-flex align-items-center">
    <div class="x30"></div>
    <svg class="i12" viewBox="0 0 12 12"><path d="M9 1v10L2 6z" fill="#666"/></svg>
    <div class="hspace d-flex align-items-center">
      <div class="hthumb"></div>
      <svg class="i12 ms-1" viewBox="0 0 12 12"><path d="M3 1v10l7-5z" fill="#666"/></svg>
      <svg class="i16 ms-3" viewBox="0 0 16 16"><path d="M8 2v2.4M8 7v2.4M8 12v2.4" stroke="#555" stroke-width="2"/></svg>
    </div>
    <div class="plus d-flex align-items-center"><svg class="i22" viewBox="0 0 22 22"><circle cx="11" cy="11" r="9.5" fill="none" stroke="#666" stroke-width="1.3"/><path d="M11 6v10M6 11h10" stroke="#555" stroke-width="1.6"/></svg></div>
    <div class="sheettab d-flex align-items-center justify-content-center">Sheet1</div>
    <div class="tabnav d-flex align-items-center">
      <svg class="i12" viewBox="0 0 12 12"><path d="M8 2L4 6l4 4" fill="none" stroke="#bbb" stroke-width="1.5"/></svg>
      <svg class="i12" viewBox="0 0 12 12"><path d="M4 2l4 4-4 4" fill="none" stroke="#bbb" stroke-width="1.5"/></svg>
    </div>
  </div>

  <!-- status bar -->
  <footer class="sb d-flex align-items-center">
    <span class="st-ready">Ready</span>
    <svg class="i20 st-acc"><use href="#acc"/></svg>
    <span class="st-accl">Accessibility: Investigate</span>
    <div class="ms-auto d-flex align-items-center">
      <span class="st-avg">Average: 4846.333333</span>
      <span class="st-cnt">Count: 8</span>
      <span class="st-sum">Sum: 14539</span>
      <div class="vw on d-flex align-items-center justify-content-center"><svg class="i20"><use href="#grid"/></svg></div>
      <div class="x12"></div>
      <div class="vw d-flex align-items-center justify-content-center"><svg class="i20"><use href="#page"/></svg></div>
      <div class="x12"></div>
      <div class="vw d-flex align-items-center justify-content-center"><svg class="i20"><use href="#brk"/></svg></div>
      <span class="x16 text-center st-min">−</span>
      <div class="slider"><i></i></div>
      <span class="x16 text-center st-plus">+</span>
      <span class="st-pct">140%</span>
    </div>
  </footer>
  <div class="strip"></div>

  <!-- mini toolbar -->
  <div class="mini">
    <div class="row1 d-flex align-items-center">
      <select class="form-select xs fs84"><option>B Nazani</option></select>
      <div class="x4"></div>
      <select class="form-select xs fs62"><option>14</option></select>
      <div class="x38 d-flex justify-content-center"><span class="A">A<small>˄</small></span></div>
      <div class="x34 d-flex justify-content-center"><span class="A">A<small>˅</small></span></div>
      <div class="x28 ib ns">$</div>
      <div class="x20 ib"><svg class="c10"><use href="#chev"/></svg></div>
      <div class="x38 ib ns">%</div>
      <div class="x30 ib"><svg class="i22"><use href="#comma"/></svg></div>
      <div class="x34 ib"><svg class="i26"><use href="#merge"/></svg></div>
    </div>
    <div class="mrow2 d-flex align-items-center">
      <button class="btn ib on x32 tb fw-bold" type="button">B</button>
      <div class="x34 ib tb fst-italic">I</div>
      <button class="btn ib on x32" type="button"><svg class="i24"><use href="#a-c"/></svg></button>
      <div class="x35 ib"><svg class="i24"><use href="#fillc"/></svg></div>
      <div class="x16 ib"><svg class="c10"><use href="#chev"/></svg></div>
      <div class="x44 ib"><svg class="i24"><use href="#fcol"/></svg></div>
      <div class="x6 d-flex justify-content-center"><svg class="c10"><use href="#chev"/></svg></div>
      <div class="x4"></div>
      <div class="x44 ib"><svg class="i24"><use href="#borders"/></svg></div>
      <div class="x6 d-flex justify-content-center"><svg class="c10"><use href="#chev"/></svg></div>
      <div class="x6"></div>
      <div class="x46 ib"><svg class="i24"><use href="#inc"/></svg></div>
      <div class="x20 d-flex justify-content-center"><svg class="i24"><use href="#dec"/></svg></div>
      <div class="x48 ib"><svg class="i24"><use href="#brush"/></svg></div>
    </div>
  </div>

  <!-- context menu -->
  <ul class="dropdown-menu show ctx">
    <li class="msearch">Search the menus</li>
    <li><a class="dropdown-item" href="#"><span class="mi"><svg class="i24"><use href="#cut"/></svg></span><span>Cu<u>t</u></span></a></li>
    <li><a class="dropdown-item" href="#"><span class="mi"><svg class="i24"><use href="#copy"/></svg></span><span><u>C</u>opy</span></a></li>
    <li><a class="dropdown-item fw-semibold" href="#"><span class="mi"><svg class="i24"><use href="#paste"/></svg></span><span>Paste Options:</span></a></li>
    <li><a class="dropdown-item tall" href="#"><span class="mi"></span><svg class="i34"><use href="#pa"/></svg></a></li>
    <li><a class="dropdown-item" href="#"><span class="mi"></span><span>Paste <u>S</u>pecial...</span></a></li>
    <li><hr class="dropdown-divider"></li>
    <li><a class="dropdown-item" href="#"><span class="mi"></span><span><u>I</u>nsert</span></a></li>
    <li><a class="dropdown-item" href="#"><span class="mi"></span><span><u>D</u>elete</span></a></li>
    <li><a class="dropdown-item" href="#"><span class="mi"></span><span>Clear Co<u>n</u>tents</span></a></li>
    <li><hr class="dropdown-divider thin"></li>
    <li><a class="dropdown-item" href="#"><span class="mi"><svg class="i24"><use href="#fc"/></svg></span><span><u>F</u>ormat Cells...</span></a></li>
    <li><a class="dropdown-item" href="#"><span class="mi"></span><span>Column <u>W</u>idth...</span></a></li>
    <li><a class="dropdown-item hl" href="#"><span class="mi"></span><span><u>H</u>ide</span></a></li>
    <li><a class="dropdown-item" href="#"><span class="mi"></span><span><u>U</u>nhide</span></a></li>
  </ul>
  <div class="ring"></div>
</div>
<script src="https://cdn.jsdelivr.net/npm/bootstrap@5.3.0/dist/js/bootstrap.bundle.min.js"></script>
</body>
</html>
